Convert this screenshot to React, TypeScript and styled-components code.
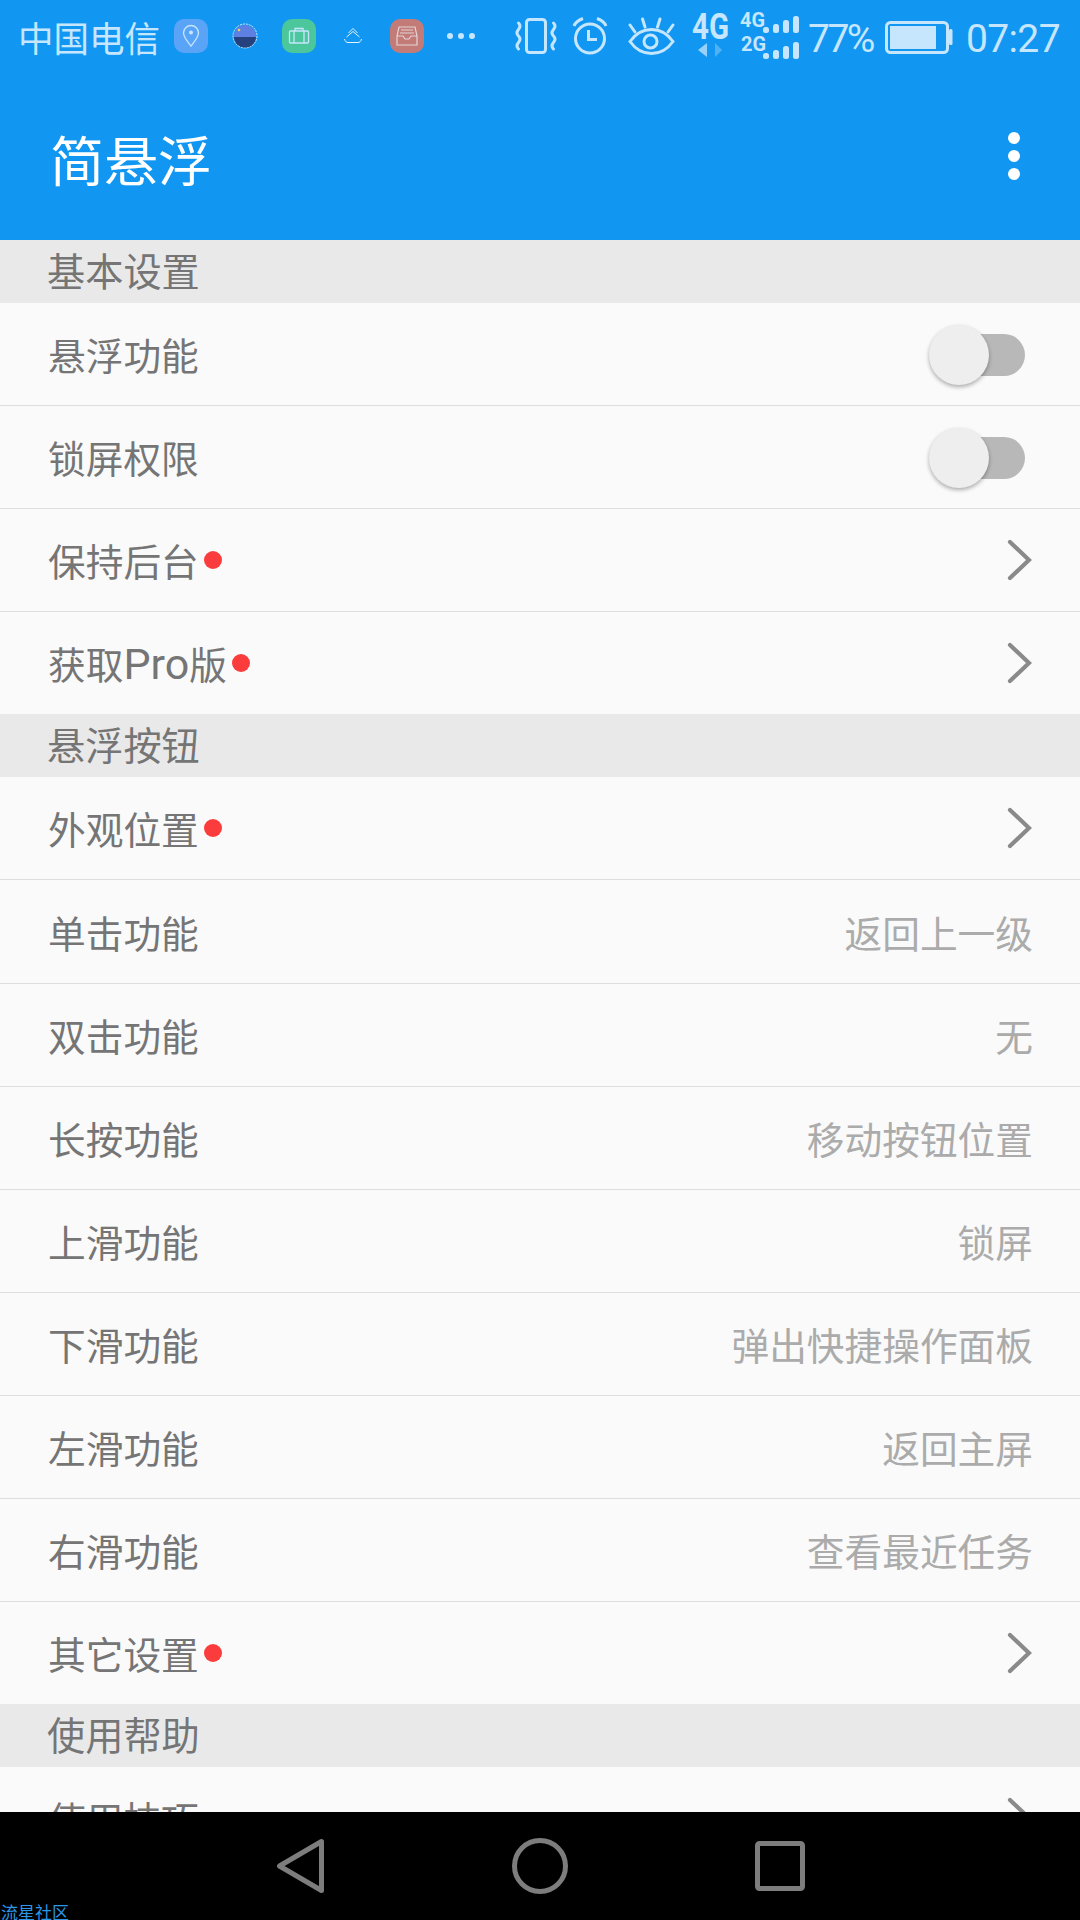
import * as React from "react";
import styled, { createGlobalStyle } from "styled-components";

const GlobalStyle = createGlobalStyle`
  html, body {
    margin: 0;
    padding: 0;
    background: #fafafa;
    font-family: "Noto Sans CJK SC", "Noto Sans", sans-serif;
  }
`;

const Screen = styled.div`
  position: relative;
  width: 1080px;
  height: 1920px;
  display: flex;
  flex-direction: column;
  overflow: hidden;
  background: #fafafa;
`;

const Header = styled.header`
  height: 240px;
  flex: none;
  background: #1197f2;
  display: flex;
  flex-direction: column;
`;

const StatusBar = styled.div`
  height: 72px;
  display: flex;
  align-items: center;
  justify-content: space-between;
  padding: 0 20px;
  color: #c6e6fd;
`;

const TileGroup = styled.div`
  display: flex;
  align-items: center;
  gap: 20px;
`;

const IndicatorGroup = styled.div`
  display: flex;
  align-items: center;
`;

const Carrier = styled.span`
  font-size: 35.5px;
  line-height: 44px;
  width: 136px;
  margin-left: -2px;
  padding-top: 2px;
  white-space: nowrap;
`;

const StatusText = styled.span<{ $ml: number; $spacing: number }>`
  margin-left: ${(p) => p.$ml}px;
  padding-top: 5px;
  font-family: Roboto, sans-serif;
  font-weight: 400;
  font-size: 39px;
  line-height: 44px;
  letter-spacing: ${(p) => p.$spacing}px;
  white-space: nowrap;
`;

const Indicator = styled.svg<{ $ml?: number }>`
  display: block;
  flex: none;
  height: 48px;
  margin-left: ${(p) => p.$ml ?? 0}px;
  overflow: visible;
  fill: none;
  stroke: #c6e6fd;
  stroke-width: 3;
`;

const Toolbar = styled.div`
  flex: 1;
  display: flex;
  align-items: center;
  justify-content: space-between;
  padding: 0 60px 0 50px;
  color: #fff;
`;

const Title = styled.h1`
  margin: 6px 0 0;
  font-size: 54px;
  line-height: 70px;
  font-weight: 400;
`;

const MoreDots = styled.div`
  display: flex;
  flex-direction: column;
  gap: 6px;
`;

const MoreDot = styled.span`
  width: 12px;
  height: 12px;
  border-radius: 50%;
  background: #fff;
`;

const List = styled.main`
  flex: 1;
  min-height: 0;
  overflow: hidden;
`;

const SectionTitle = styled.div`
  height: 63px;
  background: #e9e9e9;
  color: #757575;
  font-size: 38.2px;
  line-height: 59px;
  padding-left: 47px;
`;

const Row = styled.div<{ $last?: boolean; $height?: number }>`
  box-sizing: border-box;
  height: ${(p) => p.$height ?? 103}px;
  display: flex;
  align-items: center;
  justify-content: space-between;
  padding: 0 48px;
  border-bottom: ${(p) => (p.$last ? "none" : "1px solid #dedede")};
`;

const RowLabel = styled.div`
  display: flex;
  align-items: center;
  gap: 5px;
  color: #757575;
  font-size: 37.7px;
  line-height: 50px;
`;

const Latin = styled.span`
  font-family: Roboto, sans-serif;
  font-size: 43px;
`;

const RedDot = styled.span`
  width: 18px;
  height: 18px;
  border-radius: 50%;
  background: #fb3c3c;
`;

const RowValue = styled.div`
  margin-right: -1px;
  color: #ababab;
  font-size: 37.7px;
  line-height: 50px;
`;

const Chevron = styled.svg`
  display: block;
  width: 26px;
  height: 42px;
`;

const Toggle = styled.div`
  position: relative;
  width: 75px;
  height: 42px;
  margin: 1px 7px 0 0;
  border-radius: 21px;
  background: #b8b8b8;
`;

const Thumb = styled.span`
  position: absolute;
  left: -21px;
  top: -9px;
  width: 60px;
  height: 60px;
  border-radius: 50%;
  background: #eeeeee;
  box-shadow: 0 2px 4px rgba(0, 0, 0, 0.32);
`;

const NavBar = styled.nav`
  position: relative;
  flex: none;
  height: 108px;
  background: #000;
  display: flex;
  align-items: flex-start;
  justify-content: center;
  gap: 184px;
  padding-top: 26px;
  box-sizing: border-box;
`;

const NavIcon = styled.svg`
  display: block;
  width: 56px;
  height: 56px;
  fill: none;
  stroke: #7d7d7d;
  stroke-width: 5;
  stroke-linejoin: round;
`;

const Watermark = styled.span`
  position: absolute;
  left: 1px;
  bottom: 0;
  font-size: 17px;
  line-height: 17px;
  color: #2b97e6;
`;

const TileIcon = styled.svg`
  display: block;
  width: 34px;
  height: 34px;
`;

const ICON = "#c6e6fd";

const PinTile = () => (
  <TileIcon viewBox="0 0 34 34">
    <rect width="34" height="34" rx="10" fill="#5aa4f8" />
    <path d="M17 27c-4-5-7.500-9-7.500-13a7.500 7.500 0 0 1 15 0c0 4-3.500 8-7.500 13z" fill="none" stroke={ICON} strokeWidth="1.3" />
    <circle cx="17" cy="13.500" r="2" fill={ICON} />
  </TileIcon>
);

const MoonTile = () => (
  <TileIcon viewBox="0 0 34 34">
    <circle cx="17" cy="17" r="11" fill="#5d80e2" />
    <path d="M6 18h22a11 11 0 0 1-22 0z" fill="#25427f" />
    <circle cx="17" cy="17" r="12" fill="none" stroke="#fff" strokeWidth="0.8" strokeDasharray="2 1" />
    <circle cx="11" cy="11" r="1.300" fill="#f0d050" />
  </TileIcon>
);

const BagTile = () => (
  <TileIcon viewBox="0 0 34 34">
    <rect width="34" height="34" rx="10" fill="#4bc79b" />
    <rect x="7.500" y="12" width="19" height="12" rx="1" fill="none" stroke={ICON} strokeWidth="1.300" />
    <path d="M13 12V9.500h8V12M12 12v12M22 12v12" fill="none" stroke={ICON} strokeWidth="1.300" />
  </TileIcon>
);

const UpTile = () => (
  <TileIcon viewBox="0 0 34 34">
    <path
      d="M12.500 14l4.500-4.500 4.500 4.500M10.500 18l6.500-5.500 6.500 5.500M8.500 20c.5 2.500 2 3.500 3.500 3.500h10c1.500 0 3-1 3.500-3.500"
      fill="none"
      stroke="#e6f4ff"
      strokeWidth="1"
    />
  </TileIcon>
);

const InboxTile = () => (
  <TileIcon viewBox="0 0 34 34">
    <rect width="34" height="34" rx="10" fill="#c37b78" />
    <path d="M9 8h16l2 9v9H7v-9zM7 17h6l2 3h4l2-3h6M11 11h12M10 14h14" fill="none" stroke="#e5d3d6" strokeWidth="1.200" />
  </TileIcon>
);

const DotsTile = () => (
  <TileIcon viewBox="0 0 34 34">
    <circle cx="6" cy="17" r="3" fill={ICON} />
    <circle cx="17" cy="17" r="3" fill={ICON} />
    <circle cx="28" cy="17" r="3" fill={ICON} />
  </TileIcon>
);

const VibrateIcon = () => (
  <Indicator viewBox="0 0 42 48" width="42">
    <rect x="11.500" y="7.500" width="19" height="33" rx="3" />
    <path d="M3.500 11q3 3 0 6.500t0 6.500 0 6.500 0 6.500M38.500 11q3 3 0 6.500t0 6.500 0 6.500 0 6.500" strokeLinecap="round" />
  </Indicator>
);

const AlarmIcon = () => (
  <Indicator viewBox="0 0 36 48" width="36" $ml={15}>
    <circle cx="18" cy="26.500" r="14.500" />
    <path d="M16.500 18v9.500h8.500M2 14q2-5 9-7.500M34 14q-2-5-9-7.500" />
  </Indicator>
);

const EyeIcon = () => (
  <Indicator viewBox="0 0 47 48" width="47" $ml={20}>
    <path d="M2 29.500C8 21 15 17.500 23.500 17.500S39 21 45 29.500C39 38 32 41.500 23.500 41.500S8 38 2 29.500z" />
    <circle cx="22.500" cy="29.500" r="6.500" />
    <path d="M2 13l5 7M14.500 7l2.500 8M32 7l-2.500 8M45 13l-5 7" strokeLinecap="round" />
  </Indicator>
);

const NetworkIcon = () => {
  const bars = [
    { x: 71, h: 6 },
    { x: 81, h: 9 },
    { x: 91, h: 13 },
    { x: 101, h: 17 },
  ];
  return (
    <Indicator viewBox="0 0 108 48" width="108" $ml={17} style={{ stroke: "none" }}>
      <text x="0" y="27" fill={ICON} fontFamily="Roboto, sans-serif" fontWeight="700" fontSize="36" textLength="37" lengthAdjust="spacingAndGlyphs">
        4G
      </text>
      <path d="M15 31v14l-9-7z" fill={ICON} opacity="0.75" />
      <path d="M23 31v14l7-7z" fill={ICON} opacity="0.35" />
      <text x="48" y="15" fill={ICON} fontFamily="Roboto, sans-serif" fontWeight="700" fontSize="20" textLength="25" lengthAdjust="spacingAndGlyphs">
        4G
      </text>
      <text x="49" y="39" fill={ICON} fontFamily="Roboto, sans-serif" fontWeight="700" fontSize="20" textLength="25" lengthAdjust="spacingAndGlyphs">
        2G
      </text>
      {[21, 47].map((bottom) =>
        bars.map((b) => (
          <rect key={`${bottom}-${b.x}`} x={b.x} y={bottom - b.h} width="6" height={b.h} rx="2.500" fill={ICON} />
        ))
      )}
    </Indicator>
  );
};

const BatteryIcon = () => (
  <Indicator viewBox="0 0 67 48" width="67" $ml={12}>
    <rect x="1.500" y="10.500" width="61" height="30" rx="4" />
    <rect x="5" y="14" width="46" height="23" fill={ICON} stroke="none" />
    <rect x="64" y="17" width="3.500" height="16" rx="1.500" fill={ICON} stroke="none" />
  </Indicator>
);

type RowData = {
  label: React.ReactNode;
  value?: string;
  dot?: boolean;
  arrow?: boolean;
  toggle?: boolean;
  last?: boolean;
  height?: number;
};

const basicRows: RowData[] = [
  { label: "悬浮功能", toggle: true },
  { label: "锁屏权限", toggle: true },
  { label: "保持后台", dot: true, arrow: true },
  {
    label: (
      <>
        获取<Latin>Pro</Latin>版
      </>
    ),
    dot: true,
    arrow: true,
    last: true,
    height: 102,
  },
];

const buttonRows: RowData[] = [
  { label: "外观位置", dot: true, arrow: true },
  { label: "单击功能", value: "返回上一级", height: 104 },
  { label: "双击功能", value: "无" },
  { label: "长按功能", value: "移动按钮位置" },
  { label: "上滑功能", value: "锁屏" },
  { label: "下滑功能", value: "弹出快捷操作面板" },
  { label: "左滑功能", value: "返回主屏" },
  { label: "右滑功能", value: "查看最近任务" },
  { label: "其它设置", dot: true, arrow: true, last: true, height: 102 },
];

const helpRows: RowData[] = [{ label: "使用技巧", arrow: true }];

const SettingRow = ({ label, value, dot, arrow, toggle, last, height }: RowData) => (
  <Row $last={last} $height={height}>
    <RowLabel>
      <span>{label}</span>
      {dot && <RedDot />}
    </RowLabel>
    {value && <RowValue>{value}</RowValue>}
    {toggle && (
      <Toggle>
        <Thumb />
      </Toggle>
    )}
    {arrow && (
      <Chevron viewBox="0 0 26 42">
        <path d="M4 3l19 18L4 39" fill="none" stroke="#8a8a8a" strokeWidth="4.200" strokeLinecap="round" />
      </Chevron>
    )}
  </Row>
);

export default function App() {
  return (
    <Screen>
      <GlobalStyle />
      <Header>
        <StatusBar>
          <TileGroup>
            <Carrier>中国电信</Carrier>
            <PinTile />
            <MoonTile />
            <BagTile />
            <UpTile />
            <InboxTile />
            <DotsTile />
          </TileGroup>
          <IndicatorGroup>
            <VibrateIcon />
            <AlarmIcon />
            <EyeIcon />
            <NetworkIcon />
            <StatusText $ml={8} $spacing={-2.5}>
              77%
            </StatusText>
            <BatteryIcon />
            <StatusText $ml={14} $spacing={-0.6}>
              07:27
            </StatusText>
          </IndicatorGroup>
        </StatusBar>
        <Toolbar>
          <Title>简悬浮</Title>
          <MoreDots>
            <MoreDot />
            <MoreDot />
            <MoreDot />
          </MoreDots>
        </Toolbar>
      </Header>
      <List>
        <SectionTitle>基本设置</SectionTitle>
        {basicRows.map((r, i) => (
          <SettingRow key={i} {...r} />
        ))}
        <SectionTitle>悬浮按钮</SectionTitle>
        {buttonRows.map((r, i) => (
          <SettingRow key={i} {...r} />
        ))}
        <SectionTitle>使用帮助</SectionTitle>
        {helpRows.map((r, i) => (
          <SettingRow key={i} {...r} />
        ))}
      </List>
      <NavBar>
        <NavIcon viewBox="0 0 56 56">
          <path d="M49.500 3.500v49L7.500 28z" />
        </NavIcon>
        <NavIcon viewBox="0 0 56 56">
          <circle cx="28" cy="28" r="25.500" />
        </NavIcon>
        <NavIcon viewBox="0 0 56 56">
          <rect x="5.500" y="5.500" width="45" height="45" rx="2" />
        </NavIcon>
        <Watermark>流星社区</Watermark>
      </NavBar>
    </Screen>
  );
}
